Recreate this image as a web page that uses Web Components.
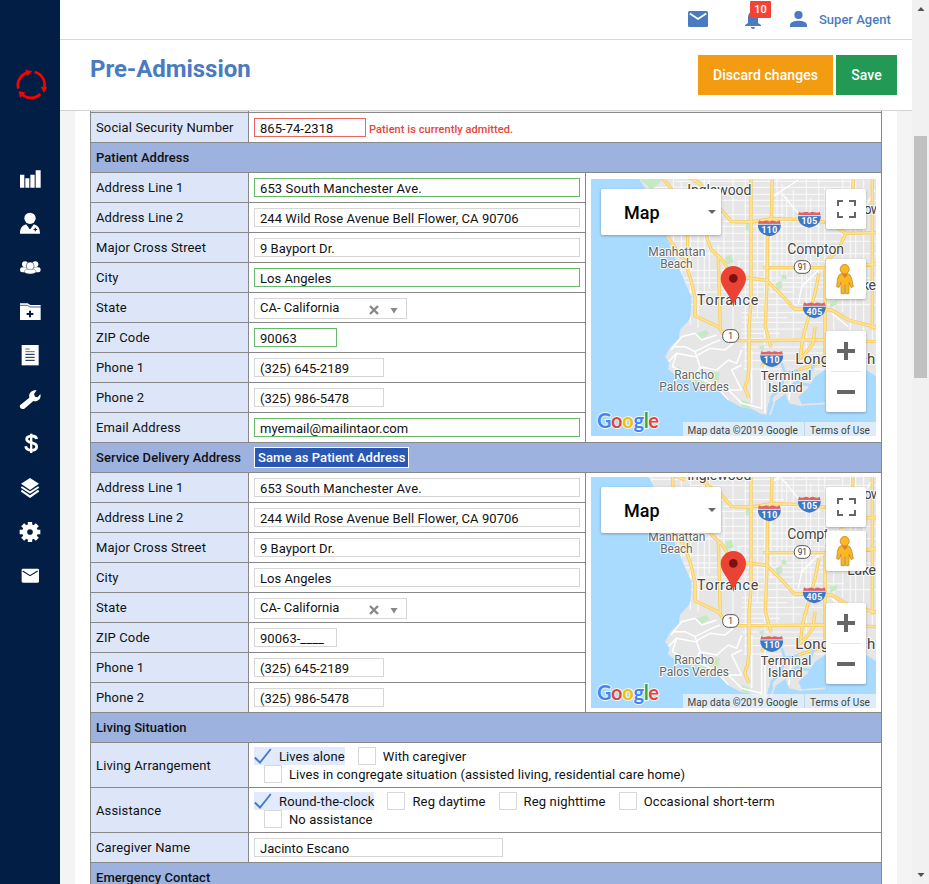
<!DOCTYPE html>
<html lang="en">
<head>
<meta charset="utf-8">
<title>Pre-Admission</title>
<style>
html,body{margin:0;height:100%;overflow:hidden}
body{font-family:Roboto,"Liberation Sans",sans-serif;font-size:13px;color:#111;background:#f4f4f4}
</style>
</head>
<body>
<app-shell>
  <side-nav slot="nav"></side-nav>
  <top-bar slot="head">Super Agent</top-bar>
  <page-title slot="head">Pre-Admission
    <action-button slot="actions" style="--bg:#f39c12;--w:135px;--ls:.06px">Discard changes</action-button>
    <action-button slot="actions" style="--bg:#229954;--w:61px">Save</action-button>
  </page-title>
  <form-table>
    <form-row label="Social Security Number"><text-box w="112" state="bad">865-74-2318</text-box><error-note>Patient is currently admitted.</error-note></form-row>
    <section-row label="Patient Address"></section-row>
    <address-group>
      <form-row label="Address Line 1"><text-box state="ok" style="--ls:.12px">653 South Manchester Ave.</text-box></form-row>
      <form-row label="Address Line 2"><text-box style="--ls:.05px">244 Wild Rose Avenue Bell Flower, CA 90706</text-box></form-row>
      <form-row label="Major Cross Street"><text-box>9 Bayport Dr.</text-box></form-row>
      <form-row label="City"><text-box state="ok">Los Angeles</text-box></form-row>
      <form-row label="State"><select-box>CA- California</select-box></form-row>
      <form-row label="ZIP Code"><text-box w="83" state="ok">90063</text-box></form-row>
      <form-row label="Phone 1"><text-box w="130" style="--ls:.02px">(325) 645-2189</text-box></form-row>
      <form-row label="Phone 2"><text-box w="130" style="--ls:.02px">(325) 986-5478</text-box></form-row>
      <form-row label="Email Address"><text-box state="ok">myemail@mailintaor.com</text-box></form-row>
      <city-map slot="map" h="257"></city-map>
    </address-group>
    <section-row label="Service Delivery Address"><copy-button>Same as Patient Address</copy-button></section-row>
    <address-group style="--pt:4px">
      <form-row label="Address Line 1"><text-box style="--ls:.12px">653 South Manchester Ave.</text-box></form-row>
      <form-row label="Address Line 2"><text-box style="--ls:.05px">244 Wild Rose Avenue Bell Flower, CA 90706</text-box></form-row>
      <form-row label="Major Cross Street"><text-box>9 Bayport Dr.</text-box></form-row>
      <form-row label="City"><text-box>Los Angeles</text-box></form-row>
      <form-row label="State"><select-box>CA- California</select-box></form-row>
      <form-row label="ZIP Code"><text-box w="83">90063-____</text-box></form-row>
      <form-row label="Phone 1"><text-box w="130" style="--ls:.02px">(325) 645-2189</text-box></form-row>
      <form-row label="Phone 2"><text-box w="130" style="--ls:.02px">(325) 986-5478</text-box></form-row>
      <city-map slot="map" h="231"></city-map>
    </address-group>
    <section-row label="Living Situation"></section-row>
    <form-row label="Living Arrangement" tall>
      <check-line><check-item checked>Lives alone</check-item><check-item>With caregiver</check-item></check-line>
      <check-line indent><check-item>Lives in congregate situation (assisted living, residential care home)</check-item></check-line>
    </form-row>
    <form-row label="Assistance" tall>
      <check-line style="--ls:.14px"><check-item checked>Round-the-clock</check-item><check-item>Reg daytime</check-item><check-item>Reg nighttime</check-item><check-item>Occasional short-term</check-item></check-line>
      <check-line indent><check-item>No assistance</check-item></check-line>
    </form-row>
    <form-row label="Caregiver Name"><text-box w="249">Jacinto Escano</text-box></form-row>
    <section-row label="Emergency Contact"></section-row>
  </form-table>
  <scroll-bar slot="scroll"></scroll-bar>
</app-shell>
<script>
const define = (name, html, setup) => customElements.define(name, class extends HTMLElement {
  constructor() { super(); this.attachShadow({mode: 'open'}); }
  connectedCallback() {
    this.shadowRoot.innerHTML = typeof html === 'function' ? html(this) : html;
    if (setup) setup(this);
  }
});

define('app-shell', `<style>
:host{display:grid;grid-template-columns:60px 852px 17px;height:884px;width:929px;overflow:hidden}
main{display:flex;flex-direction:column;height:884px;overflow:hidden}
.body{flex:1;min-height:0;overflow:hidden;margin:0 15px;padding:0 15px;background:#fff}
</style><slot name="nav"></slot><main><slot name="head"></slot><div class="body"><slot></slot></div></main><slot name="scroll"></slot>`);

define('side-nav', `<style>
:host{display:flex;flex-direction:column;align-items:center;background:#021e45;height:884px}
.logo{margin:68px 0 0 2px;height:32px}
nav{display:flex;flex-direction:column;gap:22px;margin-top:68px}
svg{display:block;fill:#fff}
.d{stroke:#021e45;fill:none}
</style>
<div class="logo"><svg width="32" height="32" viewBox="45 84 96 96"><g fill="none" stroke="#f00" stroke-width="8"><path d="M55 146A40 40 0 0 1 80 98"/><path d="M104 96A40 40 0 0 1 133 143"/><path d="M121 162A40 40 0 0 1 67 164"/></g><g fill="#f00"><path d="M76 89L97 94L81 109Z"/><path d="M122 140L142 142L131 158Z"/><path d="M56 154L76 157L60 174Z"/></g></svg></div>
<nav>
<svg width="22" height="22" viewBox="57 384 66 66"><path d="M60 404h13v39H60zM76 415h12v28H76zM91 404h13v39H91zM107 391h15v52h-15z"/></svg>
<svg width="22" height="22" viewBox="57 516 66 66"><ellipse cx="90" cy="535" rx="17" ry="17"/><path d="M60 581C60 565 66 556 79 553L90 567L101 553C114 556 120 565 120 581Z"/><path class="d" stroke-width="2" d="M80 553L90 567L100 553M90 559v7"/><path class="d" stroke-width="3.500" d="M106 563v11M100.500 568.500h11"/></svg>
<svg width="22" height="22" viewBox="57 648 66 66"><circle cx="75" cy="673" r="9"/><circle cx="106" cy="673" r="9"/><rect x="60" y="682" width="25" height="15" rx="7"/><rect x="97" y="682" width="25" height="15" rx="7"/><circle cx="90.500" cy="678" r="12" stroke="#021e45" stroke-width="1.500"/><path stroke="#021e45" stroke-width="1" d="M73 696c0-7 5-8 10-8h15c5 0 10 1 10 8c-4 8-31 8-35 0z"/></svg>
<svg width="22" height="22" viewBox="57 780 66 66"><path d="M60 790h23l8 5h31v45H60z"/><path class="d" stroke-width="2" d="M60 796h22l8 5h33"/><path class="d" stroke-width="6" d="M90 812v20M80 822h20"/></svg>
<svg width="22" height="22" viewBox="57 42 66 66"><path d="M65 45h51v61H65z"/><g class="d" stroke-width="3"><path stroke="#667" d="M76 57h13M76 65h28"/><path d="M76 73h28M76 82h28M76 91h28"/></g></svg>
<svg width="22" height="22" viewBox="57 174 66 66"><path d="M60 226L88 203C85 190 95 179 110 181L102 192L105 200L113 202L121 192C125 207 112 217 100 213L73 236C65 240 57 233 60 226Z"/></svg>
<svg width="22" height="22" viewBox="57 306 66 66"><path fill="none" stroke="#fff" stroke-width="8.500" d="M110 327C107 314 80 316 80 328C80 342 110 334 110 350C110 365 80 365 77 349"/><path d="M90 311h7v58h-7z"/></svg>
<svg width="22" height="22" viewBox="57 438 66 66"><path d="M90 444L117 461L90 480L63 461Z"/><g fill="none" stroke="#fff" stroke-width="6"><path d="M64 471L90 488L116 471M64 482L90 500L116 482"/></g></svg>
<svg width="22" height="22" viewBox="57 570 66 66"><path fill="none" stroke="#fff" stroke-width="15" d="M106 606A16 16 0 1 1 74 606A16 16 0 1 1 106 606"/><path stroke="#fff" stroke-width="13" d="M90 576v12M90 624v12M59 606h12M109 606h12M68 584l8 8M104 620l8 8M112 584l-8 8M76 620l-8 8"/></svg>
<svg width="22" height="22" viewBox="57 703 66 66"><rect x="65" y="717" width="52" height="42" rx="4"/><path class="d" stroke-width="3.500" d="M68 724L90 738L113 724"/></svg>
</nav>`);

define('top-bar', `<style>
:host{display:block;flex:none;background:#fff;height:39px;border-bottom:1px solid #d8d8d8;color:#4a7bc1}
.r{display:flex;align-items:center;height:38px;padding-left:628px}
svg{display:block;fill:#4a7bc1}
.bell{position:relative;margin:2px 0 0 37px}
.badge{position:absolute;left:5px;top:-10px;width:21px;height:17px;background:#f44336;color:#fff;font:500 11px/17px Roboto,sans-serif;text-align:center;border-radius:1px}
.p{margin-left:29px}
b{font-weight:500;margin-left:12px;line-height:18px;padding-top:1px;white-space:nowrap}
</style><div class="r">
<svg width="20" height="16" viewBox="0 0 20 16"><rect width="20" height="16" rx="1.500"/><path d="M1.800 2.500L10 8L18.200 2.500" fill="none" stroke="#fff" stroke-width="1.700"/></svg>
<div class="bell"><svg width="16" height="18" viewBox="0 0 16 18"><path d="M8 0C4 1 3 4 3 7v5L0 14v1h16v-1l-3-2V7C13 4 12 1 8 0zM6 16h4a2 2 0 0 1-4 0z"/></svg><span class="badge">10</span></div>
<svg class="p" width="17" height="16" viewBox="0 0 17 16"><circle cx="8.500" cy="4" r="4.100"/><path d="M0 16v-2c0-3 5-4.300 8.500-4.300S17 11 17 14v2z"/></svg>
<b><slot></slot></b></div>`);

define('page-title', `<style>
:host{display:flex;flex:none;box-sizing:border-box;height:71px;background:#fff;border-bottom:1px solid #d3d3d3;padding:0 15px 0 30px;justify-content:space-between;align-items:flex-start;color:#4a7bc1}
h1{margin:15px 0 0;font:700 24px/28px Roboto,sans-serif;letter-spacing:-.05px}
div{display:flex;gap:3px;margin-top:15px}
</style><h1><slot></slot></h1><div><slot name="actions"></slot></div>`);

define('action-button', `<style>
:host{display:block;width:var(--w);height:40px;background:var(--bg);color:#fff;font:500 14px/40px Roboto,sans-serif;text-align:center;letter-spacing:var(--ls,0);white-space:nowrap}
</style><slot></slot>`);

define('form-table', `<style>:host{display:block;width:790px;border:solid #888;border-width:0 1px;padding-top:1px;background:linear-gradient(90deg,#d4dded 157px,#888 157px 158px,#eee 158px)}</style><slot></slot>`);

define('form-row', el => `<style>
:host{display:flex;height:29px;border-top:1px solid #888;background:#fff}
:host([tall]){height:44px}
label{flex:none;box-sizing:border-box;width:158px;border-right:1px solid #888;background:#dce6f8;padding:5px 0 0 5px;line-height:19px;letter-spacing:.13px;white-space:nowrap}
:host([tall]) label{padding-top:13px}
.v{padding:5px 0 0 5px;display:flex;align-items:flex-start}
:host([tall]) .v{padding-top:4px;flex-direction:column}
</style><label>${el.getAttribute('label')}</label><div class="v"><slot></slot></div>`);

define('section-row', el => `<style>
:host{display:flex;height:29px;border-top:1px solid #888;background:#9db2df;font-weight:500}
span{width:154px;flex:none;padding:5px 0 0 5px;line-height:19px;letter-spacing:.04px;white-space:nowrap}
.a{padding:4px 0 0 4px}
</style><span>${el.getAttribute('label')}</span><div class="a"><slot></slot></div>`);

define('copy-button', `<style>
:host{display:block;box-sizing:border-box;height:21px;width:155px;border:1px solid #fff;background:#2a57b0;color:#fff;font-weight:500;line-height:20px;padding-left:3px;letter-spacing:.06px;white-space:nowrap}
</style><slot></slot>`);

define('text-box', el => `<style>
:host{display:block;box-sizing:border-box;width:${el.getAttribute('w') || 326}px;height:19px;border:1px solid #d6d6d6;background:#fff;padding:1px 0 0 5px;line-height:17px;letter-spacing:var(--ls,.04px);white-space:nowrap}
:host([state=ok]){border-color:#66b96a}
:host([state=bad]){border-color:#f0625d}
</style><slot></slot>`);

define('error-note', `<style>:host{display:block;margin:2px 0 0 3px;font-size:11px;font-weight:500;line-height:19px;letter-spacing:.07px;color:#ea4335;white-space:nowrap}</style><slot></slot>`);

define('select-box', `<style>
:host{display:flex;box-sizing:border-box;width:153px;height:21px;border:1px solid #d6d6d6;padding-left:5px;line-height:18px;justify-content:space-between;white-space:nowrap}
svg{margin:6px 7px 0 0}
</style><span><slot></slot></span><svg width="30" height="10" viewBox="0 0 30 10"><path d="M1 1L9 9M9 1L1 9" stroke="#888" stroke-width="2.400"/><path d="M21.500 3h7L25 8.500z" fill="#888"/></svg>`);

define('check-line', `<style>:host{display:flex;gap:13px;height:18px}:host([indent]){margin-left:10px}</style><slot></slot>`);

define('check-item', el => `<style>
:host{display:flex;height:18px;gap:7px;line-height:19px;letter-spacing:var(--ls,.08px);white-space:nowrap}
:host([checked]){background:#e2ebfe}
i{box-sizing:border-box;width:18px;height:18px;border:1px solid #d8d8d8;background:#fff}
</style>${el.hasAttribute('checked') ? '<svg width="18" height="18" viewBox="0 0 18 18"><path d="M.8 10.500L6 15.500L16.800 2" fill="none" stroke="#4a7bc1" stroke-width="1.900"/></svg>' : '<i></i>'}<span><slot></slot></span>`);

define('address-group', `<style>
:host{display:flex}
.l{width:494px;flex:none}
.m{flex:1;border-top:1px solid #888;border-left:1px solid #888;background:#fff;padding:var(--pt,6px) 5px 0 5px}
</style><div class="l"><slot></slot></div><div class="m"><slot name="map"></slot></div>`);

define('scroll-bar', `<style>
:host{display:flex;flex-direction:column;align-items:center;background:#f1f1f1;height:884px}
svg{display:block;margin-top:6px}
.t{width:13px;height:242px;background:#c1c1c1;margin-top:124px}
.e{margin-top:auto;margin-bottom:6px}
</style><svg width="8" height="6" viewBox="0 0 8 6"><path d="M.5 5L4 1l3.500 4z" fill="#505050"/></svg><div class="t"></div><svg class="e" width="8" height="6" viewBox="0 0 8 6"><path d="M.5 1L4 5l3.500-4z" fill="#505050"/></svg>`);

const shield = (x, y, n) => `<g transform="translate(${x} ${y})"><path d="M-31-23Q-24-18-16-21Q-8-25 0-19Q8-25 16-21Q24-18 31-23L34-12H-34Z" fill="#dc6468"/><path d="M-34-11H34C36 8 22 21 0 25C-22 21-36 8-34-11Z" fill="#3c78c8"/><path d="M-34-11H34" stroke="#fff" stroke-width="2"/><text y="14" text-anchor="middle" font-size="26" font-weight="700" fill="#fff" textLength="47">${n}</text></g>`;
const route = (x, y, n) => `<rect x="${x - 24}" y="${y - 19}" width="48" height="38" rx="17" fill="#fff" stroke="#555" stroke-width="3"/><text x="${x}" y="${y + 9}" text-anchor="middle" font-size="25" fill="#333">${n}</text>`;
const label = (x, y, w, s, t, c = '#444') => `<text x="${x}" y="${y}" textLength="${w}" font-size="${s}" fill="${c}" stroke="#fff" stroke-width="6" stroke-linejoin="round" paint-order="stroke" stroke-opacity=".85">${t}</text>`;

/* Street grid: irregular spacing, some streets stop short. */
const streets = () => {
  let d = '', s = 7;
  const r = () => (s = (s * 16807) % 2147483647) / 2147483647;
  for (let x = 200; x < 880; x += 13 + r() * 15) {
    const a = r() < .4 ? 20 : 20 + r() * 280, b = r() < .4 ? 600 : 280 + r() * 260;
    d += `M${x | 0} ${a | 0}V${b | 0}`;
  }
  for (let y = 34; y < 600; y += 13 + r() * 14) {
    const a = r() < .4 ? 200 : 200 + r() * 280, b = r() < .4 ? 880 : 560 + r() * 280;
    d += `M${Math.max(a, y > 420 ? 470 : 0) | 0} ${y | 0}H${b | 0}`;
  }
  return d;
};
const freeways = 'M498 20V400L492 470V590L488 632Q474 652 484 666L492 683M562 20L559 150L548 162L546 330L541 470L558 532M230 20L262 60L300 75M305 20L345 40L365 75V110M350 80L400 110L440 155L500 156L560 146L680 150L735 160L782 190L873 188M262 60L270 190M308 150V282M365 150V200L378 238L415 272L440 322L500 325L545 331L590 375L628 417H690L740 420L790 450L873 472M535 293H720L873 282M240 190L300 275L315 320L330 380V437L402 472L418 495L460 512L700 510L873 515M400 262L406 472M702 310L690 370L676 420L652 510L646 565M720 300V560M782 190L760 240L722 275M690 470L684 520L660 552L640 570M805 20L800 160M862 20V480M558 545L530 590M640 600L700 580L790 560';

define('city-map', el => {
  const h = +el.getAttribute('h'), top = 27 + (257 - h) * 1.5;
  return `<style>
:host{display:block;position:relative;width:285px;height:${h}px;overflow:hidden;font-family:Roboto,sans-serif}
svg{display:block}
.c{position:absolute;background:#fff;border-radius:2px;box-shadow:0 1px 3px rgba(0,0,0,.28);box-sizing:border-box}
.type{left:10px;top:10px;width:120px;height:46px;padding:0 5px 0 23px;display:flex;align-items:center;justify-content:space-between;font-size:18px;font-weight:500;color:#000}
.full{left:235px;top:10px;width:40px;height:40px;padding:11px 10px}
.peg{left:235px;bottom:137px;width:40px;height:40px;padding:5px 10px}
.zoom{left:235px;bottom:24px;width:40px;height:81px}
.logo{position:absolute;left:5px;bottom:0}
.attr{position:absolute;right:0;bottom:0;height:14px;display:flex;font-size:10px;line-height:17px;color:#444;background:rgba(240,243,247,.72);white-space:nowrap;letter-spacing:.07px}
.attr span{padding:0 6px 0 5px}.attr span+span{border-left:1px solid #c4d5e4}
</style>
<svg width="285" height="${h}" viewBox="18 ${top} 855 ${h * 3}">
<defs><clipPath id="land"><path id="coast" d="M158 20L178 50L200 80L240 185L262 245L285 300L303 345L320 380L317 438L308 455L285 480L283 505L256 532L241 560L253 578L250 598L266 610L270 625L310 628L345 640L390 650L428 690L470 712L500 716L528 732L545 734L550 700L575 690L600 668L612 700L652 708L640 680L668 655L690 620L720 600L800 590L843 600L880 622V20Z"/></clipPath></defs>
<rect x="18" y="20" width="860" height="790" fill="#a9daff"/>
<use href="#coast" fill="#e6e6e6"/>
<g clip-path="url(#land)">
<path d="${streets()}" fill="none" stroke="#fbfbfb" stroke-width="3"/>
<g fill="#c5e8c5"><path d="M158 20L200 60L242 20ZM420 260l20-6 6 22-20 8zM482 160h10v20h-10zM572 340l18-8 2 22-16 6zM735 395l22-6v14l-22 10zM520 530l18-4-4 18zM590 314h14v14h-14z"/></g>
<g fill="#e6e6e6"><path d="M240 440L395 490L480 540L470 700L370 660L230 620Z"/><path d="M570 605L690 560V720H560Z" fill-opacity=".7"/></g>
<path fill="#c5e8c5" d="M335 490l30-9 8 12-22 14zM270 590l20 4 10 20-24-4zM375 605l30 3-6 30-22-8zM300 622l40 6 40 12v12l-50-14zM470 690l24 8v20l-24-6z"/>
<path fill="none" stroke="#fff" stroke-width="4.500" stroke-linejoin="round" d="M258 540L290 500L330 490L350 510L395 495M265 530L300 530L330 545L380 520L405 510M250 575L275 550L330 560L375 535L420 540L445 520M330 545L345 590L395 600L430 570L455 580L470 540M345 590L330 620L380 640L430 660L470 660L455 630L440 600L470 585M275 550L262 590L310 610M430 660L470 700L530 715V600M395 650L430 690M500 540V700M540 560V730M570 610L590 660M620 600L612 690"/>
<path fill="none" stroke="#fff" stroke-width="4" d="M562 80L640 30M700 300L650 350L640 400M870 60L830 130L790 130M590 70L640 130M740 430L790 470"/>
<path d="${freeways}" fill="none" stroke="#f5cb5c" stroke-width="10" stroke-linejoin="round"/>
<path d="${freeways}" fill="none" stroke="#ffe293" stroke-width="5.500" stroke-linejoin="round"/>
</g>
<path fill="none" stroke="#a9daff" stroke-width="8" d="M552 735L560 680L588 655L600 610L590 580M612 650L650 630L680 600L690 570M640 640L710 650M600 610L640 600"/>
<path fill="none" stroke="#e6e6e6" stroke-width="5" d="M555 735L570 690L600 670M640 705L720 700"/>
${label(307, 75, 192, 42, 'Inglewood')}${label(811, 132, 78, 42, 'Dow')}${label(607, 251, 170, 42, 'Compton')}
${label(190, 259, 171, 36, 'Manhattan', '#666')}${label(226, 295, 97, 36, 'Beach', '#666')}
${label(787, 361, 86, 42, 'Lake')}${label(336, 406, 184, 43, 'Torrance')}
${label(268, 628, 119, 36, 'Rancho', '#666')}${label(223, 664, 209, 36, 'Palos Verdes', '#666')}
${label(527, 629, 152, 38, 'Terminal')}${label(549, 666, 104, 38, 'Island')}${label(631, 582, 240, 45, 'Long Beach')}
${shield(553, 174, 110)}${shield(673, 148, 105)}${shield(688, 420, 405)}${shield(560, 566, 110)}
${route(652, 291, 91)}${route(437, 498, 1)}
<path d="M445 411C440 375 407 355 407 326A38 38 0 0 1 483 326C483 355 450 375 445 411Z" fill="#ea4335"/><circle cx="445" cy="325" r="13" fill="#7c1210"/>
</svg>
<div class="c type"><span>Map</span><svg width="8" height="4" viewBox="0 0 8 4"><path d="M0 0h8L4 4z" fill="#666"/></svg></div>
<div class="c full"><svg width="20" height="18" viewBox="0 0 20 18"><path d="M2 6V1H7M13 1H19V6M19 12V17H13M7 17H2V12" fill="none" stroke="#666" stroke-width="2"/></svg></div>
<div class="c peg"><svg width="18" height="31" viewBox="0 0 60 96" preserveAspectRatio="none"><g fill="#fbb823" stroke="#a87822" stroke-width="2"><path d="M19 30Q10 32 7 46L4 70L12 73L18 57L19 92H30V66H34V92H45L46 57L52 73L60 70L54 44Q50 32 42 30Z" transform="translate(-2)"/><circle cx="29" cy="16" r="15"/></g><path d="M19 32H41L30 43Z" fill="#e37d26"/></svg></div>
<div class="c zoom"><svg width="40" height="81" viewBox="0 0 40 81"><path d="M11 20H29M20 11V29M11 61H29" stroke="#666" stroke-width="4"/><path d="M5 40.500H35" stroke="#e6e6e6"/></svg></div>
<svg class="logo" width="70" height="28" viewBox="0 0 70 28"><text x="1" y="20" textLength="62" font-family="Lato,sans-serif" font-weight="700" font-size="20" stroke="#fff" stroke-width="2" stroke-opacity=".8" paint-order="stroke"><tspan fill="#4285f4">G</tspan><tspan fill="#ea4335">o</tspan><tspan fill="#fbbc05">o</tspan><tspan fill="#4285f4">g</tspan><tspan fill="#34a853">l</tspan><tspan fill="#ea4335">e</tspan></text></svg>
<div class="attr"><span>Map data ©2019 Google</span><span>Terms of Use</span></div>`;
});
</script>
</body>
</html>
